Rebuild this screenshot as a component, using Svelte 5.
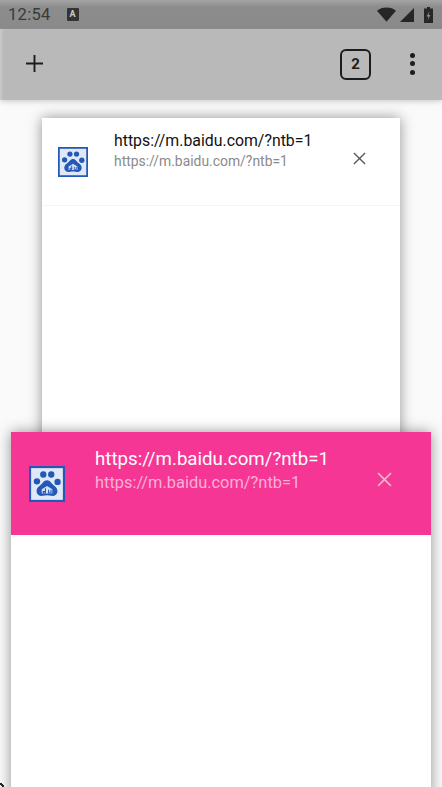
<script>
  const url = "https://m.baidu.com/?ntb=1";
  const pawDots = [
    [7.5, 14.5, 3], [13.5, 8, 3], [21, 8, 3], [27, 15, 3]
  ];
</script>

{#snippet favicon()}
  <svg class="favicon" viewBox="0 0 34 34">
    <rect x="1" y="1" width="32" height="32" fill="#dfe8f7" stroke="#2358b8" stroke-width="2" />
    {#each pawDots as [cx, cy, r]}
      <circle {cx} {cy} {r} fill="#2358b8" />
    {/each}
    <path d="M17 13.500c-3 0-4 3-6.500 4.800-2.200 1.500-3.800 3.500-3.300 6.200.5 3 3.200 4.200 5.800 3.700 1.500-.3 2.800-.5 4-.5s2.500.2 4 .5c2.600.5 5.300-.7 5.800-3.700.5-2.700-1.100-4.700-3.300-6.200-2.500-1.800-3.500-4.800-6.500-4.800z" fill="#2358b8" />
    <path d="M12 22l5-3 5 3v4h-10z" fill="#d5e0f3" />
    <path d="M13.500 24h2v1.500h-2zM15.500 21v4.500M18.500 22.500v3h2.300v-3" fill="none" stroke="#2358b8" stroke-width="1" />
  </svg>
{/snippet}

{#snippet closeIcon()}
  <svg class="close" viewBox="0 0 14 14">
    <path d="M1 1l12 12M13 1L1 13" fill="none" stroke="currentColor" stroke-width="1.500" />
  </svg>
{/snippet}

<div class="screen">
  <header class="top">
    <div class="status">
      <span class="time">12:54</span>
      <span class="notif">A</span>
      <div class="status-right">
        <svg width="19" height="15" viewBox="0 0 20 15"><path d="M0 3.500C2.500 1.200 6 0 10 0s7.500 1.200 10 3.500L10 15z" fill="#262626" /></svg>
        <svg width="14" height="14" viewBox="0 0 15 15"><path d="M15 0v15H0z" fill="#262626" /></svg>
        <svg class="battery" width="9" height="16" viewBox="0 0 9 16">
          <path d="M3 0h3v1.500h3V16H0V1.500h3z" fill="#262626" />
          <path d="M5.500 4L2.500 9.500h2L3.500 13.500l3-5.500h-2z" fill="#8c8c8c" />
        </svg>
      </div>
    </div>
    <div class="toolbar">
      <svg class="plus" viewBox="0 0 18 18"><path d="M9 0v18M0 9h18" fill="none" stroke="#1c1c1c" stroke-width="2" /></svg>
      <div class="count">2</div>
      <div class="menu"><i></i><i></i><i></i></div>
    </div>
  </header>

  <main class="tabs">
    <section class="card back">
      <div class="tab-head">
        {@render favicon()}
        <div class="titles">
          <div class="title">{url}</div>
          <div class="sub">{url}</div>
        </div>
        {@render closeIcon()}
      </div>
    </section>

    <section class="card front">
      <div class="tab-head">
        {@render favicon()}
        <div class="titles">
          <div class="title">{url}</div>
          <div class="sub">{url}</div>
        </div>
        {@render closeIcon()}
      </div>
    </section>
  </main>
  <div class="corner"></div>
</div>

<style>
  :global(body) {
    margin: 0;
    background: #fafafa;
  }
  .screen {
    position: relative;
    width: 442px;
    height: 787px;
    overflow: hidden;
    background: #fafafa;
    font-family: Roboto, "Liberation Sans", sans-serif;
  }
  .top {
    position: relative;
    z-index: 2;
    box-shadow: 0 1px 6px rgba(0, 0, 0, 0.22);
  }
  .status {
    height: 29px;
    box-sizing: border-box;
    padding: 0 9px 0 8px;
    display: flex;
    align-items: center;
    background: linear-gradient(#a4a4a4 0, #8c8c8c 7px, #8a8a8a 100%);
    color: #3a3a3a;
  }
  .time {
    font-size: 16.500px;
    letter-spacing: 0.3px;
  }
  .notif {
    width: 12px;
    height: 13px;
    margin-left: 16px;
    background: #333;
    color: #ccc;
    font-size: 9px;
    font-weight: 700;
    line-height: 13px;
    text-align: center;
    border-radius: 1px;
  }
  .status-right {
    margin-left: auto;
    display: flex;
    align-items: center;
    gap: 4px;
    color: #262626;
  }
  .battery {
    margin-left: 6px;
  }
  .toolbar {
    height: 71px;
    box-sizing: border-box;
    display: flex;
    align-items: center;
    padding: 0 27px 0 26px;
    background: #b9b9b9;
    box-shadow: inset 3px 0 3px -1px rgba(255, 255, 255, 0.25);
  }
  .plus {
    width: 17px;
    height: 17px;
    margin-top: -2px;
  }
  .count {
    margin-left: auto;
    margin-right: 39px;
    width: 31px;
    height: 31px;
    box-sizing: border-box;
    border: 2px solid #1c1c1c;
    border-radius: 6px;
    margin-top: -1px;
    color: #1c1c1c;
    font-size: 15px;
    font-weight: 700;
    line-height: 27px;
    text-align: center;
  }
  .menu {
    display: flex;
    flex-direction: column;
    gap: 3.500px;
    margin-top: -2px;
  }
  .menu i {
    display: block;
    width: 5px;
    height: 5px;
    border-radius: 50%;
    background: #1c1c1c;
  }
  .tabs {
    position: relative;
    padding: 18px 42px 0;
  }
  .card {
    background: #fff;
    box-shadow: 0 0 13px rgba(0, 0, 0, 0.42);
  }
  .back {
    height: 400px;
  }
  .back .tab-head {
    height: 88px;
    padding-left: 16px;
    padding-right: 34px;
    border-bottom: 1px solid #f5f5f5;
  }
  .back .favicon {
    width: 30px;
    height: 30px;
    margin-top: 1px;
  }
  .back .titles {
    margin-left: 26px;
    margin-bottom: 21px;
  }
  .back .title {
    font-size: 15.850px;
    line-height: 20px;
    color: #111;
  }
  .back .sub {
    font-size: 13.900px;
    line-height: 20px;
    color: #8a8a8a;
  }
  .back .close {
    width: 13px;
    height: 13px;
    margin-bottom: 7px;
    color: #5a5a5a;
  }
  /* the selected tab sits over the one behind it */
  .front {
    position: absolute;
    left: 11px;
    top: 332px;
    width: 420px;
    height: 400px;
  }
  .front .tab-head {
    height: 103px;
    padding-left: 18px;
    padding-right: 39px;
    background: #f53695;
    color: #fff;
  }
  .front .favicon {
    width: 36px;
    height: 36px;
    margin-top: 1px;
  }
  .front .titles {
    margin-left: 30px;
    margin-bottom: 26px;
  }
  .front .title {
    font-size: 18.700px;
    line-height: 24px;
    color: #fff;
  }
  .front .sub {
    font-size: 16.400px;
    line-height: 24px;
    color: #fbb0d5;
  }
  .front .close {
    width: 15px;
    height: 15px;
    color: #fbb0d5;
    margin-top: -8px;
  }
  .tab-head {
    display: flex;
    align-items: center;
    box-sizing: border-box;
  }
  .favicon {
    flex: none;
    filter: blur(0.4px);
  }
  .titles {
    flex: 1;
    min-width: 0;
    white-space: nowrap;
  }
  .close {
    flex: none;
  }
  .corner {
    position: absolute;
    left: 0;
    bottom: 0;
    width: 4px;
    height: 4px;
    background: linear-gradient(45deg, transparent 35%, #222 35%, #222 65%, transparent 65%);
    z-index: 3;
  }
</style>
